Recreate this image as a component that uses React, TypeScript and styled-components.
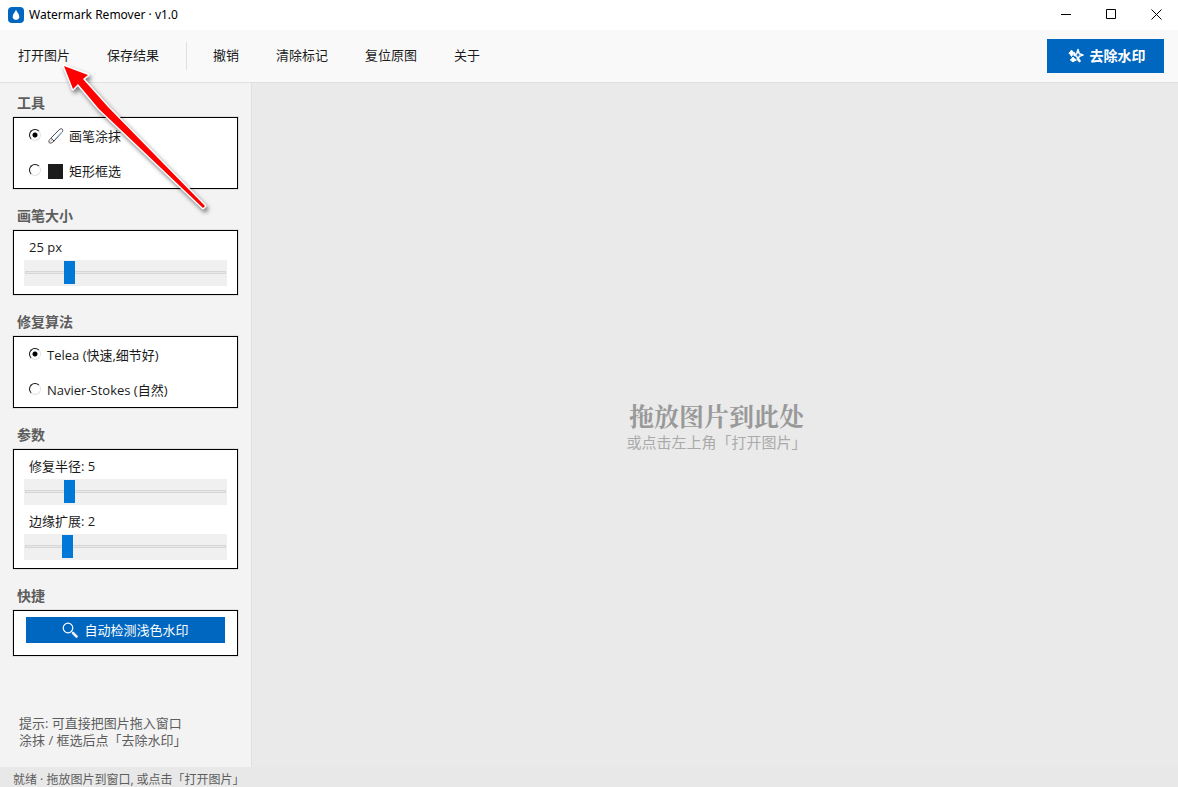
import React, { useState } from "react";
import styled, { createGlobalStyle } from "styled-components";

const GlobalStyle = createGlobalStyle`
  * { box-sizing: border-box; }
  body {
    margin: 0;
    background: #eaeaea;
    color: #1b1b1b;
    font-family: "Open Sans", "Noto Sans CJK SC", sans-serif;
    font-size: 13px;
  }
  button, input { font: inherit; margin: 0; }
`;

const cjk = `"Noto Sans CJK SC", "Open Sans", sans-serif`;

const Window = styled.div`
  position: relative;
  display: flex;
  flex-direction: column;
  min-height: 100vh;
`;

const TitleBar = styled.header`
  display: flex;
  align-items: center;
  height: 30px;
  padding-left: 8px;
  background: #fff;
`;

const Title = styled.h1`
  flex: 1;
  margin: 0 0 0 5px;
  color: #000;
  font-family: "Noto Sans", sans-serif;
  font-size: 12px;
  line-height: 20px;
  font-weight: 400;
`;

const WindowButton = styled.button<{ $width?: number }>`
  display: flex;
  align-items: center;
  justify-content: center;
  width: ${(p) => p.$width ?? 45}px;
  height: 30px;
  padding: 0 0 2px;
  border: 0;
  background: transparent;
  color: #000;
`;

const Toolbar = styled.nav`
  display: flex;
  align-items: center;
  gap: 1px;
  height: 53px;
  padding-right: 14px;
  border-bottom: 1px solid #e0e0e0;
  background: #f9f9f9;
`;

const ToolbarButton = styled.button`
  height: 34px;
  padding: 0 18px 2px;
  border: 0;
  background: transparent;
  color: #1b1b1b;
  font-family: ${cjk};
  font-size: 13px;
  line-height: 20px;
`;

const Separator = styled.span`
  width: 1px;
  height: 28px;
  margin: 0 7px 0 8px;
  background: #e0e0e0;
`;

const PrimaryButton = styled.button<{ $large?: boolean }>`
  display: flex;
  align-items: center;
  justify-content: center;
  gap: 6px;
  width: ${(p) => (p.$large ? "117px" : "100%")};
  height: ${(p) => (p.$large ? 34 : 26)}px;
  margin-left: ${(p) => (p.$large ? "auto" : "0")};
  padding: ${(p) => (p.$large ? "0 0 2px 2px" : "0")};
  border: 0;
  background: #0067c0;
  color: #fff;
  font-family: ${cjk};
  font-size: ${(p) => (p.$large ? 14 : 13)}px;
  font-weight: ${(p) => (p.$large ? 700 : 400)};
  line-height: 20px;
`;

const Body = styled.div`
  display: flex;
  flex: 1;
`;

const Sidebar = styled.aside`
  display: flex;
  flex-direction: column;
  gap: 16px;
  width: 252px;
  padding: 10px 13px 18px;
  border-right: 1px solid #e0e0e0;
  background: #f3f3f3;
`;

const Group = styled.section``;

const GroupTitle = styled.h2`
  margin: 0 0 6px;
  padding-left: 4px;
  color: #5d5d5d;
  font-family: ${cjk};
  font-size: 14px;
  line-height: 18px;
  font-weight: 700;
`;

const Card = styled.div`
  margin-bottom: 1px;
  border: 1px solid #000;
  box-shadow: 0 0 0 1px #e0e0e0;
  background: #fff;
`;

const RadioRow = styled.label`
  display: flex;
  align-items: center;
  height: 35px;
  padding-left: 15px;
  line-height: 20px;
`;

const Radio = styled.input.attrs({ type: "radio" })`
  appearance: none;
  width: 12px;
  height: 12px;
  margin: 0 6px 1px 0;
  border: 1px solid;
  border-color: #111 #e3e3e3 #e3e3e3 #111;
  border-radius: 50%;
  background: #fff;
  &:checked {
    background: radial-gradient(circle, #000 2px, #fff 3px);
  }
`;

const RowIcon = styled.span`
  display: flex;
  width: 16px;
  margin: 0 5px 0 1px;
`;

const SliderBlock = styled.div`
  padding: 3px 10px 0;
  &:last-child { padding-bottom: 8px; }
`;

const SliderLabel = styled.label`
  display: block;
  padding-left: 5px;
  line-height: 26px;
`;

const Slider = styled.input.attrs({ type: "range" })`
  appearance: none;
  display: block;
  width: 100%;
  height: 26px;
  background:
    linear-gradient(#e7eaea, #e7eaea) 2px 12px / calc(100% - 4px) 1px no-repeat,
    linear-gradient(#d6d6d6, #d6d6d6) 1px 11px / calc(100% - 2px) 3px no-repeat,
    #f0f0f0;
  &::-webkit-slider-runnable-track {
    height: 26px;
  }
  &::-webkit-slider-thumb {
    appearance: none;
    width: 11px;
    height: 23px;
    margin-top: 1px;
    background: #0078d7;
  }
`;

const QuickCard = styled(Card)`
  padding: 6px 12px 12px;
`;

const Hint = styled.p`
  margin: auto 0 0;
  padding-left: 6px;
  color: #5d5d5d;
  line-height: 17px;
`;

const Canvas = styled.main`
  display: flex;
  flex: 1;
  flex-direction: column;
  align-items: center;
  justify-content: center;
  padding: 3px 0 0 3px;
  background: #eaeaea;
  font-family: ${cjk};
`;

const DropTitle = styled.p`
  margin: 0;
  color: #999;
  font-size: 25px;
  line-height: 30px;
  font-weight: 700;
  font-family: "Noto Serif CJK SC", ${cjk};
`;

const DropHint = styled.p`
  margin: 0;
  color: #aaa;
  font-size: 15px;
  line-height: 24px;
`;

const StatusBar = styled.footer`
  height: 20px;
  padding-left: 13px;
  background: #e8e8e8;
  color: #5d5d5d;
  font-size: 12px;
  line-height: 25px;
`;

const Pointer = styled.svg`
  position: absolute;
  top: 56px;
  left: 56px;
  pointer-events: none;
  filter: drop-shadow(2px 3px 2px rgba(0, 0, 0, 0.5));
`;

const AppLogo = () => (
  <svg width="16" height="16" viewBox="0 0 16 16" aria-hidden="true">
    <rect width="16" height="16" rx="4" fill="#0067c0" />
    <path d="M8 2.800C8.600 5 11.300 6.800 11.300 9.600a3.300 3.300 0 0 1-6.600 0C4.700 6.800 7.400 5 8 2.800z" fill="#fff" />
  </svg>
);

const SparkIcon = () => (
  <svg width="16" height="16" viewBox="0 0 16 16" aria-hidden="true">
    <path d="M3.500 3l1.200 1.800L7 6 4.700 7.500 3.500 9.500 2.300 7.500.8 6l1.500-1.200z" fill="#fff" stroke="#fff" strokeLinejoin="round" />
    <path d="M5 10l1.200 1.500L8.500 13l-2.300 1L5 15l-1.200-1-1.500-1 1.500-1.500z" fill="#fff" stroke="#fff" strokeLinejoin="round" />
    <path d="M10 12l1.500 2" stroke="#fff" strokeWidth="2.500" strokeLinecap="round" />
    <path
      d="M10 2.500l1.300 4.200L15 8l-3.700 1.300L10 12.500 8.700 9.300 6 8l2.700-1.300z"
      fill="#0067c0"
      stroke="#fff"
      strokeWidth="1.500"
      strokeLinejoin="round"
    />
  </svg>
);

const BrushIcon = () => (
  <svg width="16" height="16" viewBox="0 0 16 16" fill="none" aria-hidden="true">
    <path
      d="M1.200 14.700c-.9-1 0-2.900 1.200-4L11 1.900c1.200-1.200 2.600-1.500 3.300-.8.800.8.500 2.200-.5 3.300L6 13.100c-1.300 1.400-3.800 2.700-4.800 1.600z"
      fill="#fff"
      stroke="#4a4a55"
    />
    <path d="M3 10.300l3.200 2.800" stroke="#4a4a55" />
    <path d="M7 11.200l6.600-7.200" stroke="#8fbbe6" />
    <path d="M2.300 13.600l1.500-1.500" stroke="#d9a067" />
  </svg>
);

const SearchIcon = () => (
  <svg width="16" height="16" viewBox="0 0 16 16" fill="none" aria-hidden="true">
    <circle cx="6" cy="6" r="4.800" stroke="#fff" strokeWidth="1.200" />
    <path d="M9.500 9.500l1.500 1.500" stroke="#fff" />
    <path d="M11 11l3.500 3.500" stroke="#e6eef8" strokeWidth="2.600" strokeLinecap="round" />
  </svg>
);

type SliderFieldProps = { id: string; min: number; max: number; initial: number; format: (n: number) => string };

const SliderField = ({ id, min, max, initial, format }: SliderFieldProps) => {
  const [value, setValue] = useState(initial);
  return (
    <SliderBlock>
      <SliderLabel htmlFor={id}>{format(value)}</SliderLabel>
      <Slider id={id} min={min} max={max} value={value} onChange={(e) => setValue(Number(e.target.value))} />
    </SliderBlock>
  );
};

export default function App() {
  return (
    <Window>
      <GlobalStyle />
      <TitleBar>
        <AppLogo />
        <Title>Watermark Remover · v1.0</Title>
        <WindowButton aria-label="最小化">
          <svg width="11" height="11" aria-hidden="true"><path d="M0 5.500h10" stroke="currentColor" /></svg>
        </WindowButton>
        <WindowButton aria-label="最大化">
          <svg width="11" height="11" aria-hidden="true"><path d="M.5.5h9v9h-9z" fill="none" stroke="currentColor" /></svg>
        </WindowButton>
        <WindowButton aria-label="关闭" $width={44}>
          <svg width="11" height="11" aria-hidden="true"><path d="M.5.5l10 10M10.500.5l-10 10" stroke="currentColor" /></svg>
        </WindowButton>
      </TitleBar>
      <Toolbar>
        <ToolbarButton>打开图片</ToolbarButton>
        <ToolbarButton>保存结果</ToolbarButton>
        <Separator />
        <ToolbarButton>撤销</ToolbarButton>
        <ToolbarButton>清除标记</ToolbarButton>
        <ToolbarButton>复位原图</ToolbarButton>
        <ToolbarButton>关于</ToolbarButton>
        <PrimaryButton $large><SparkIcon />去除水印</PrimaryButton>
      </Toolbar>
      <Body>
        <Sidebar>
          <Group>
            <GroupTitle>工具</GroupTitle>
            <Card>
              <RadioRow><Radio name="tool" defaultChecked /><RowIcon><BrushIcon /></RowIcon>画笔涂抹</RadioRow>
              <RadioRow>
                <Radio name="tool" />
                <RowIcon>
                  <svg width="16" height="16" aria-hidden="true"><path d="M0 1h15v15H0z" fill="#1b1b1b" /></svg>
                </RowIcon>
                矩形框选
              </RadioRow>
            </Card>
          </Group>
          <Group>
            <GroupTitle>画笔大小</GroupTitle>
            <Card><SliderField id="brush" min={5} max={100} initial={25} format={(n) => `${n} px`} /></Card>
          </Group>
          <Group>
            <GroupTitle>修复算法</GroupTitle>
            <Card>
              <RadioRow><Radio name="algorithm" defaultChecked />Telea (快速,细节好)</RadioRow>
              <RadioRow><Radio name="algorithm" />Navier-Stokes (自然)</RadioRow>
            </Card>
          </Group>
          <Group>
            <GroupTitle>参数</GroupTitle>
            <Card>
              <SliderField id="radius" min={1} max={20} initial={5} format={(n) => `修复半径: ${n}`} />
              <SliderField id="expand" min={0} max={10} initial={2} format={(n) => `边缘扩展: ${n}`} />
            </Card>
          </Group>
          <Group>
            <GroupTitle>快捷</GroupTitle>
            <QuickCard><PrimaryButton><SearchIcon />自动检测浅色水印</PrimaryButton></QuickCard>
          </Group>
          <Hint>提示: 可直接把图片拖入窗口<br />涂抹 / 框选后点「去除水印」</Hint>
        </Sidebar>
        <Canvas>
          <DropTitle>拖放图片到此处</DropTitle>
          <DropHint>或点击左上角「打开图片」</DropHint>
        </Canvas>
      </Body>
      <StatusBar>就绪 · 拖放图片到窗口, 或点击「打开图片」</StatusBar>
      <Pointer width="160" height="160" viewBox="56 56 160 160" aria-hidden="true">
        <path
          d="M64 66L88 75L83 79L108 107L205 206L203 208L99 109L78 84L73 89Z"
          fill="#f00"
          stroke="#fff"
          strokeWidth="3"
          strokeLinejoin="round"
          paintOrder="stroke"
        />
      </Pointer>
    </Window>
  );
}
